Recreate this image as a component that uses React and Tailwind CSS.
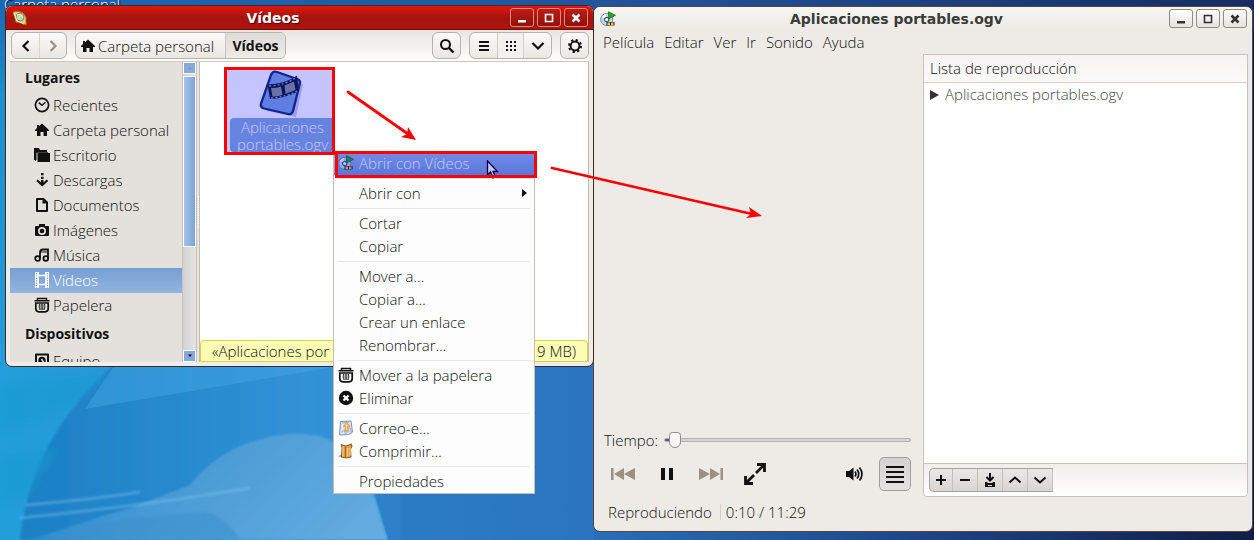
import React from "react";

const ink = "#111111";

function Svg({ children, size = 16, className = "", ...rest }) {
  return (
    <svg width={size} height={size} viewBox="0 0 16 16" fill="none" className={"shrink-0 " + className} aria-hidden="true" {...rest}>
      {children}
    </svg>
  );
}

const HomeIcon = () => (
  <Svg>
    <path d="M8 1.5 15 8v1h-2v5H9.500v-4h-3v4H3V9H1V8l2-2V3h2v1.300z" fill={ink} />
  </Svg>
);
const ClockIcon = () => (
  <Svg>
    <circle cx="8" cy="8" r="6.600" stroke={ink} strokeWidth="1.700" />
    <path d="M4.800 5.600 8 8.400l3.400-3.200" stroke={ink} strokeWidth="1.400" />
  </Svg>
);
const FolderIcon = () => (
  <Svg>
    <path d="M0 1h5l1 2h7v2H2.500v8H0z" fill={ink} />
    <path d="M3.500 6H16v9H3.500z" fill={ink} />
    <path d="M1.500 14V5.500H14" stroke={ink} strokeWidth=".8" />
  </Svg>
);
const DownloadIcon = () => (
  <Svg>
    <path d="M7 1h2.500v2.300H7zM7 4.800h2.500v2.300H7zM7 8h2.500v4H7z" fill={ink} />
    <path d="M3 8.300 8.200 13l5.300-4.700" stroke={ink} strokeWidth="2.200" />
  </Svg>
);
const DocumentIcon = () => (
  <Svg>
    <path d="M3 2h6.500L13 5.500V14H3z" stroke={ink} strokeWidth="2" strokeLinejoin="round" />
    <path d="M8.500 2v4.500H13z" fill={ink} />
  </Svg>
);
const CameraIcon = () => (
  <Svg>
    <path fillRule="evenodd" d="M5 2h6v2h3q1 0 1 1v8q0 1-1 1H2q-1 0-1-1V5q0-1 1-1h3zm3 3a4 4 0 1 0 0 8 4 4 0 0 0 0-8z" fill={ink} />
    <circle cx="8" cy="9" r="2.300" fill={ink} />
  </Svg>
);
const MusicIcon = () => (
  <Svg>
    <path d="M6 11V5.500q0-3 3-3h5V11" stroke={ink} strokeWidth="1.800" />
    <circle cx="3.600" cy="11.500" r="2.400" stroke={ink} strokeWidth="1.800" />
    <circle cx="11.800" cy="11.500" r="2.300" stroke={ink} strokeWidth="1.800" />
    <path d="M6 5h7" stroke={ink} />
  </Svg>
);
const FilmIcon = () => (
  <Svg>
    <path d="M1 0h4v16H1zM11 0h4v16h-4z" fill="#fff" />
    <path d="M5 3.500h6M5 12.500h6" stroke="#fff" strokeWidth="1.500" />
    <path d="M2.500 1v15M13.500 1v15" stroke="#7da3d6" strokeWidth="1.200" strokeDasharray="1.200 1.200" />
  </Svg>
);
const TrashIcon = () => (
  <Svg>
    <path d="M3.500 3.500V1.500h9v2M.5 3.800h15" stroke={ink} strokeWidth="1.500" />
    <path d="M1.800 6h12.400v5.500q0 3.300-3 3.300H4.800q-3 0-3-3.300z" stroke={ink} strokeWidth="1.700" />
    <path d="M5.500 7q-1 3 .6 6M7.200 7v6M8.800 7v6M10.500 7q1 3-.6 6" stroke={ink} strokeWidth=".9" />
  </Svg>
);
const DriveIcon = () => (
  <Svg>
    <path d="M2 1.500h12V16H2z" stroke={ink} strokeWidth="2" strokeLinejoin="round" />
    <circle cx="8" cy="7.500" r="3.700" fill={ink} />
    <path d="M7.500 6 10 10" stroke="#e4e0db" strokeWidth="1.500" />
  </Svg>
);
const DeleteIcon = () => (
  <Svg>
    <circle cx="8" cy="8" r="7.200" fill={ink} />
    <path d="m5.500 5.500 5 5m0-5-5 5" stroke="#fff" strokeWidth="2.200" />
  </Svg>
);
const MailIcon = () => (
  <Svg>
    <path d="M2.500 1.500 13 1l1.500 11L11 14.500 1.500 15z" fill="#dce7f3" stroke="#7891b5" />
    <path d="M3.500 3 11 2.500M3 12.500l3-2" stroke="#9db3d0" />
    <circle cx="10" cy="11" r="3.600" fill="#c8d8ec" stroke="#8fa6c6" strokeWidth=".8" />
    <path d="m8.500 2.500 3.700 3.700h-2v5H7.300V6.500H5.500z" fill="#fbb35d" stroke="#e79232" strokeWidth=".7" />
    <path d="M8.700 5v5" stroke="#ffe2a3" />
  </Svg>
);
const PackageIcon = () => (
  <Svg>
    <path d="M0 13.500 5 10v5z" fill="#aaa" />
    <path d="M3 1.500 8 3l5.500-2 .5 3-1.500 2 .5 8-5 1-4.500-1 .5-9z" fill="#d99a43" stroke="#7c4c15" strokeWidth=".9" />
    <path d="M5 3.500v10M9.500 5v9M12 4.500v8" stroke="#f7cd7c" strokeWidth="1.300" />
    <path d="M7.500 4v10" stroke="#a86a20" />
  </Svg>
);
const DiscIcon = () => (
  <Svg>
    <circle cx="6.700" cy="8.500" r="6" fill="#c7d8e8" stroke="#6f8aa5" />
    <path d="M2 6a5 5 0 0 1 4-3l.5 5z" fill="#fff" />
    <circle cx="6.700" cy="8.500" r="2.200" fill="#fff" stroke="#365b7b" strokeWidth="1.200" />
    <path d="m8.500.7 7 3.600-7 3.700z" fill="#25a52a" stroke="#17631b" strokeWidth=".7" />
    <path d="M6.500 11h8v3.600h-8z" fill="#262626" />
    <path d="M7.500 11.400h2.500v2.800H7.500zM11 11.400h2.500v2.800H11z" fill="#edc536" />
  </Svg>
);
const ShellIcon = () => (
  <Svg>
    <path d="M1 2q5-2 10 1l3 4v8l-4-2-6-1z" fill="#e6ce7b" stroke="#9a742b" />
    <circle cx="8" cy="7" r="4" fill="#d0d6b3" stroke="#77865c" />
    <path d="m2 3 3 8 7 3M5 5q4-2 6 3" stroke="#fff4bb" />
  </Svg>
);
const Chevron = ({ d, color = ink }) => (
  <Svg>
    <path d={d} stroke={color} strokeWidth="2.200" />
  </Svg>
);
const UP = "m2.500 10.500 5.500-5 5.500 5";
const DOWN = "m2.500 5.500 5.500 5 5.500-5";

const places = [
  ["Recientes", ClockIcon],
  ["Carpeta personal", HomeIcon],
  ["Escritorio", FolderIcon],
  ["Descargas", DownloadIcon],
  ["Documentos", DocumentIcon],
  ["Imágenes", CameraIcon],
  ["Música", MusicIcon],
  ["Vídeos", FilmIcon],
  ["Papelera", TrashIcon],
];

function Wallpaper() {
  return (
    <svg className="absolute inset-0 h-full w-full" viewBox="0 0 1254 540" preserveAspectRatio="none" aria-hidden="true">
      <defs>
        <linearGradient id="sky" x1="0" y1="0" x2="1" y2="0">
          <stop offset="0" stopColor="#219fdb" />
          <stop offset=".2" stopColor="#2f90d3" />
          <stop offset=".3" stopColor="#2d85cc" />
          <stop offset=".47" stopColor="#2870b9" />
          <stop offset=".75" stopColor="#1d4383" />
          <stop offset="1" stopColor="#111d46" />
        </linearGradient>
        <linearGradient id="top" x1="0" y1="0" x2="1" y2="0">
          <stop offset="0" stopColor="#1b68b8" />
          <stop offset=".5" stopColor="#22549b" />
          <stop offset="1" stopColor="#172d60" />
        </linearGradient>
        <linearGradient id="edge" x1="0" y1="0" x2="0" y2="1">
          <stop offset="0" stopColor="#1a66b5" />
          <stop offset=".25" stopColor="#1a90cc" />
          <stop offset="1" stopColor="#259edd" />
        </linearGradient>
        <linearGradient id="wave" x1="0" y1="0" x2="1" y2="0">
          <stop offset="0" stopColor="#1c80c5" />
          <stop offset=".35" stopColor="#2688cd" />
          <stop offset=".75" stopColor="#3292d6" />
          <stop offset="1" stopColor="#3090d4" />
        </linearGradient>
        <linearGradient id="glow" x1="0" y1=".3" x2="1" y2=".6">
          <stop offset="0" stopColor="#3f9bd8" stopOpacity=".2" />
          <stop offset=".5" stopColor="#519fd7" stopOpacity=".9" />
          <stop offset="1" stopColor="#62abe0" />
        </linearGradient>
        <filter id="soft"><feGaussianBlur stdDeviation="3" /></filter>
        <filter id="hazy"><feGaussianBlur stdDeviation="1.200" /></filter>
      </defs>
      <rect width="1254" height="540" fill="url(#sky)" />
      <rect width="1254" height="30" fill="url(#top)" />
      <rect width="8" height="380" fill="url(#edge)" />
      <path d="M20 540Q30 440 112 366H400V540z" fill="url(#wave)" filter="url(#hazy)" />
      <path d="M85 409 114 366H334V367Q200 390 85 409z" fill="#3fa6e2" opacity=".5" />
      <path d="M30 540Q120 510 130 508L190 485 Q225 440 290 434 350 430 372 490L388 540z" fill="url(#glow)" filter="url(#hazy)" />
      <path d="M0 455 60 449 28 495 0 505zM0 386l110-13-40 35-70 25z" fill="#169acf" opacity=".5" filter="url(#soft)" />
      <path d="M20 518Q150 505 250 488M25 505Q90 500 140 492" stroke="#7fc4ee" strokeWidth="3" opacity=".4" fill="none" filter="url(#hazy)" />
      <path d="M240 540q-15-25-35-28l-75 6-80 16v6z" fill="#3a90cc" opacity=".55" filter="url(#hazy)" />
      <path d="M374 490 388 540H594V366H450z" fill="#2c78c2" opacity=".6" />
    </svg>
  );
}

const winGlyphs = {
  Minimizar: <path d="M4 10h8v2.500H4z" fill="currentColor" />,
  Maximizar: <path d="M4.500 4.500h7v7h-7z" stroke="currentColor" strokeWidth="1.600" />,
  Cerrar: <path d="m4.500 4.500 7 7m0-7-7 7" stroke="currentColor" strokeWidth="2.600" />,
};

function WindowButtons({ look }) {
  return (
    <div className="flex gap-[3px]">
      {Object.keys(winGlyphs).map((name) => (
        <button key={name} aria-label={name} className={"flex h-[19px] w-6 items-center justify-center rounded-[3px] border " + look}>
          <Svg>{winGlyphs[name]}</Svg>
        </button>
      ))}
    </div>
  );
}

const group = "flex h-[27px] overflow-hidden rounded-[6px] border border-[#b5b3ae] bg-gradient-to-b from-[#fbfaf9] to-[#eae6e2]";
const cell = "flex w-[27px] items-center justify-center";

function FileManager() {
  return (
    <section className="absolute left-[5px] top-[5px] flex h-[362px] w-[589px] flex-col overflow-hidden rounded-[7px] border border-[#3c2a24] bg-[#f0ece8]">
      <header className="flex h-6 shrink-0 items-center border-b border-[#6b0e08] bg-gradient-to-b from-[#e51508] via-[#a41510] to-[#b0120b] pl-[6px] pr-[5px] text-white">
        <ShellIcon />
        <h1 className="flex-1 pl-2 text-center font-[DejaVu_Sans,sans-serif] text-[14px] font-bold leading-[22px] [text-shadow:1px_1px_1px_#400]">Vídeos</h1>
        <WindowButtons look="border-[#dc8a83] bg-gradient-to-b from-[#c01c14] to-[#8e110b] text-white" />
      </header>
      <nav className="mx-1 flex h-8 shrink-0 items-center border-b border-[#d0c5bb] bg-gradient-to-b from-[#e9e5e1] to-[#fdfdfc] pl-px">
        <div className={group}>
          <button aria-label="Atrás" className={cell}><Chevron d="M10.500 3 5.500 8l5 5" /></button>
          <button aria-label="Adelante" className={cell + " border-l border-[#dcd5cf]"}><Chevron d="m5.500 3 5 5-5 5" color="#9c8f84" /></button>
        </div>
        <div className={group + " ml-2"}>
          <button className="flex w-[149px] items-center gap-[2px] whitespace-nowrap pl-1"><HomeIcon />Carpeta personal</button>
          <button className="w-[60px] border-l border-[#cfc8c1] bg-gradient-to-b from-[#dfdbd6] to-[#eeebe8] text-center text-[14px] font-bold">Vídeos</button>
        </div>
        <div className="ml-auto flex gap-2">
          <div className={group}>
            <button aria-label="Buscar" className={cell}>
              <Svg><circle cx="6.500" cy="6.500" r="4.500" stroke={ink} strokeWidth="2" /><path d="m9.500 9.500 5 5" stroke={ink} strokeWidth="2.400" /></Svg>
            </button>
          </div>
          <div className={group}>
            <button aria-label="Lista" className={cell}><Svg><path d="M3 4h10M3 8h10M3 12h10" stroke={ink} strokeWidth="2" /></Svg></button>
            <button aria-label="Iconos" className={cell + " border-x border-[#d5cec7] bg-[#f3f1ef]"}>
              <Svg><path d="M3 4h10M3 8h10M3 12h10" stroke={ink} strokeWidth="2" strokeDasharray="2 2" /></Svg>
            </button>
            <button aria-label="Opciones de vista" className={cell}><Chevron d="m2.500 5 5.500 5.500L13.500 5" /></button>
          </div>
          <div className={group}>
            <button aria-label="Ajustes" className={cell}>
              <Svg><circle cx="8" cy="8" r="4.400" stroke={ink} strokeWidth="2" /><circle cx="8" cy="8" r="6" stroke={ink} strokeWidth="2" strokeDasharray="2.200 2.512" /></Svg>
            </button>
          </div>
        </div>
      </nav>
      <div className="mx-1 mb-1 flex min-h-0 flex-1">
        <aside className="w-[172px] shrink-0 overflow-hidden bg-[#e4e0db]">
          <h2 className="pl-[15px] text-[14px] font-bold leading-[31px]">Lugares</h2>
          <ul>
            {places.map(([name, Icon]) => (
              <li key={name}>
                <a href="#lugar" className={"flex h-[25px] items-center gap-[3px] whitespace-nowrap pb-[2px] pl-6 " + (name === "Vídeos" ? "bg-gradient-to-b from-[#779fd2] to-[#92b4e0] text-white" : "")}>
                  <Icon />{name}
                </a>
              </li>
            ))}
          </ul>
          <h2 className="pl-[15px] text-[14px] font-bold leading-[31px]">Dispositivos</h2>
          <a href="#equipo" className="flex h-[25px] items-center gap-[3px] pb-[2px] pl-6"><DriveIcon />Equipo</a>
        </aside>
        <div className="flex w-[15px] shrink-0 flex-col border-x border-[#c8c1ba] bg-gradient-to-r from-[#d2d2d2] to-[#e4e4e4]">
          <div className="flex h-3 items-center justify-center border border-white bg-[#85a9dc]"><Svg size={8}><path d="M4 10h8L8 6z" fill="#9c8f84" /></Svg></div>
          <div className="mt-[2px] h-[171px] border border-white bg-gradient-to-r from-[#a4c2ea] to-[#7da3d8]" />
          <div className="mt-auto flex h-3 items-center justify-center border border-white bg-[#85a9dc]"><Svg size={8}><path d="M4 5h8l-4 5z" fill={ink} /></Svg></div>
        </div>
        <div className="flex w-[3px] shrink-0 items-center justify-center border-r border-[#c5bbb1] bg-[#e9e5e1]">
          <div className="h-8 border-l border-dotted border-white" />
        </div>
        <main className="flex min-w-0 flex-1 flex-col justify-between border-r border-[#c5bbb1] bg-white">
          <button className="ml-[30px] mt-2 flex w-[105px] flex-col items-center">
            <svg width="48" height="48" viewBox="0 0 48 48" className="shrink-0" aria-hidden="true">
              <path d="M17 6 44 14 37 47 8 41z" fill="#9b9bb0" opacity=".5" />
              <path d="M18 2 38 9q3.500 1 3 4L34 41q-1 4-5 3L5 38.500Q1 37.500 2 33.500L12 5q1.500-4.500 6-3z" fill="#7da3d8" stroke="#183070" strokeWidth="2.300" />
              <path d="M8.500 14.500Q27 14 38 5.500l2 15.500Q27 28 11 29z" fill="#15182c" />
              <path d="M12 18q6 0 10-1.500L23.500 25q-5 1.500-10 1.800zM25.500 15.500 35 11.500l1.500 8.500-10 4z" fill="#86958e" />
              <path d="M10 16Q27 15 37 7.500M12 28Q28 27 39 20.500" stroke="#7da3d8" strokeWidth="1.300" strokeDasharray="2 2.200" fill="none" />
            </svg>
            <span className="block h-[34px] w-full rounded-[4px] bg-[#87abd7] pt-px text-center leading-[17px] text-white">Aplicaciones portables.ogv</span>
          </button>
          <footer className="flex h-[22px] items-center justify-between whitespace-nowrap rounded-t-[4px] border border-[#d4d545] bg-[#fcfcb5] px-[11px]">
            <span>«Aplicaciones por</span>
            <span>9 MB)</span>
          </footer>
        </main>
      </div>
    </section>
  );
}

const menu = [
  [["Abrir con Vídeos", DiscIcon]],
  [["Abrir con"]],
  [["Cortar"], ["Copiar"]],
  [["Mover a…"], ["Copiar a…"], ["Crear un enlace"], ["Renombrar…"]],
  [["Mover a la papelera", TrashIcon], ["Eliminar", DeleteIcon]],
  [["Correo-e…", MailIcon], ["Comprimir…", PackageIcon]],
  [["Propiedades"]],
];

function ContextMenu() {
  return (
    <div role="menu" className="absolute left-[333px] top-[152px] w-[202px] border-x border-b border-[#c9beb4] bg-[#fdfdfd]">
      {menu.map((items, i) => (
        <div key={i}>
          {i > 0 && <div role="separator" className="mx-1 my-[3px] h-px bg-[#e9e7e6]" />}
          {items.map(([name, Icon]) => (
            <button key={name} role="menuitem" className={"flex h-[23px] w-full items-center gap-[5px] whitespace-nowrap pb-[2px] pl-1 pr-[6px] " + (i === 0 ? "bg-gradient-to-b from-[#96b6e2] to-[#749bd0] text-white" : "")}>
              {Icon ? <Icon /> : <span className="w-4 shrink-0" />}
              <span className="flex-1 text-left">{name}</span>
              {i === 1 && <svg width="6" height="8" viewBox="0 0 6 8" aria-hidden="true"><path d="M0 0v8l5-4z" fill={ink} /></svg>}
            </button>
          ))}
        </div>
      ))}
    </div>
  );
}

function Player() {
  const bottom = [
    ["Añadir", <path key="a" d="M8 3v10M3 8h10" stroke={ink} strokeWidth="2" />],
    ["Quitar", <path key="b" d="M3 8h10" stroke={ink} strokeWidth="2" />],
    ["Guardar", <g key="c"><path d="M8 1v7M4.500 5 8 8.500 11.500 5" stroke={ink} strokeWidth="2" /><path fillRule="evenodd" d="M3 10h2l1 1h4l1-1h2v5H3zm3 3v1h4v-1z" fill={ink} /></g>],
    ["Subir", <path key="d" d={UP} stroke={ink} strokeWidth="2" />],
    ["Bajar", <path key="e" d={DOWN} stroke={ink} strokeWidth="2" />],
  ];
  return (
    <section className="absolute left-[593px] right-px top-[6px] flex h-[526px] flex-col overflow-hidden rounded-[7px] border border-[#54443c] bg-[#eeebe7]">
      <header className="flex h-[23px] shrink-0 items-center bg-gradient-to-b from-[#f7f6f3] to-[#eeebe7] pl-[6px] pr-[5px] text-[#3b3b38]">
        <DiscIcon />
        <h1 className="flex-1 pl-2 text-center font-[DejaVu_Sans,sans-serif] text-[14px] font-bold leading-[22px]">Aplicaciones portables.ogv</h1>
        <WindowButtons look="border-[#8d8a86] bg-gradient-to-b from-white to-[#e6e2dd] text-[#333]" />
      </header>
      <nav className="flex h-6 shrink-0 items-center gap-[10px] pl-[9px]">
        {["Película", "Editar", "Ver", "Ir", "Sonido", "Ayuda"].map((m) => <button key={m}>{m}</button>)}
      </nav>
      <div className="flex min-h-0 flex-1 pr-1">
        <div className="flex flex-1 flex-col justify-end pr-3">
          <label className="flex h-6 items-center gap-[6px] pb-[2px] pl-[10px]">
            Tiempo:
            <input type="range" min="0" max="689" defaultValue="13" className="h-[18px] min-w-0 flex-1 appearance-none bg-transparent [&::-webkit-slider-runnable-track]:h-1 [&::-webkit-slider-runnable-track]:rounded-full [&::-webkit-slider-runnable-track]:border [&::-webkit-slider-runnable-track]:border-[#b3b0ad] [&::-webkit-slider-runnable-track]:bg-[linear-gradient(90deg,#3461c9_8px,#d5d3d1_8px)] [&::-webkit-slider-thumb]:-mt-[7px] [&::-webkit-slider-thumb]:h-4 [&::-webkit-slider-thumb]:w-3 [&::-webkit-slider-thumb]:appearance-none [&::-webkit-slider-thumb]:rounded-t-[4px] [&::-webkit-slider-thumb]:rounded-b-[7px] [&::-webkit-slider-thumb]:border [&::-webkit-slider-thumb]:border-[#8e8c89] [&::-webkit-slider-thumb]:bg-[#f7f6f5]" />
          </label>
          <div className="flex h-[42px] items-center pl-4">
            <button aria-label="Anterior"><svg width="26" height="14" viewBox="0 0 26 14" aria-hidden="true"><path d="M1 1h2.500v12H1zM14 1v12L4 7zM25 1v12L14 7z" fill="#9c8f84" /></svg></button>
            <button aria-label="Pausa" className="ml-6"><svg width="14" height="14" viewBox="0 0 14 14" aria-hidden="true"><path d="M1 1h4v12H1zM9 1h4v12H9z" fill={ink} /></svg></button>
            <button aria-label="Siguiente" className="ml-6"><svg width="26" height="14" viewBox="0 0 26 14" aria-hidden="true"><path d="M22.500 1H25v12h-2.500zM12 1v12l10-6zM1 1v12l11-6z" fill="#9c8f84" /></svg></button>
            <button aria-label="Pantalla completa" className="ml-5">
              <svg width="22" height="22" viewBox="0 0 22 22" fill="none" aria-hidden="true"><path d="M13 1.500h7.500V9M20 2l-8 8M1.500 13v7.500H9M2 20l8-8" stroke={ink} strokeWidth="2.800" /></svg>
            </button>
            <button aria-label="Volumen" className="ml-auto">
              <svg width="18" height="16" viewBox="0 0 18 16" fill="none" aria-hidden="true"><path d="M0 5h3l4.500-3.500v13L3 11H0z" fill={ink} /><path d="M9 5.500q1.800 2.500 0 5M11 3.500q3.500 4.500 0 9M13.500 1.500q5 6.500 0 13" stroke={ink} strokeWidth="1.700" /></svg>
            </button>
            <button aria-label="Barra lateral" className="ml-[15px] flex h-[34px] w-8 items-center justify-center rounded-[5px] border border-[#a19f9c] bg-gradient-to-b from-[#d3d2d1] to-[#e3e2e1]">
              <svg width="18" height="20" viewBox="0 0 18 20" aria-hidden="true"><path d="M0 3h18M0 8h18M0 13h18M0 18h18" stroke={ink} strokeWidth="2.200" /></svg>
            </button>
          </div>
          <div className="flex h-9 items-center pb-[2px] pl-[14px]">
            <span>Reproduciendo</span>
            <span className="ml-2 h-4 border-l border-[#d8cec5] pl-[5px] leading-4">0:10 / 11:29</span>
          </div>
        </div>
        <aside className="mb-[34px] flex w-[325px] shrink-0 flex-col rounded-b-[4px] border border-[#cbc1b8] bg-white">
          <h2 className="h-7 border-b border-[#d6cdc6] bg-gradient-to-b from-[#f5f4f3] to-[#fbfafa] pl-[6px] leading-[27px]">Lista de reproducción</h2>
          <div className="flex flex-1 items-start gap-[6px] border-b border-[#c9c2ba] pl-[6px] pt-px text-[#444]">
            <svg width="9" height="10" viewBox="0 0 9 10" className="mt-[6px]" aria-hidden="true"><path d="M0 0v10l9-5z" fill="#333" /></svg>
            Aplicaciones portables.ogv
          </div>
          <div className="flex h-8 items-center rounded-b-[4px] bg-gradient-to-b from-[#efeeeb] to-white pl-[5px]">
            <div className="flex h-6 overflow-hidden rounded-l-[5px] border border-r-0 border-[#a6a39f] bg-gradient-to-b from-[#eae8e7] to-[#d8d4d1]">
              {bottom.map(([name, glyph]) => (
                <button key={name} aria-label={name} className="flex w-[25px] items-center justify-center border-r border-[#c8c0b4] first:w-[23px]"><Svg>{glyph}</Svg></button>
              ))}
            </div>
          </div>
        </aside>
      </div>
    </section>
  );
}

function Annotations() {
  return (
    <div className="pointer-events-none">
      <svg width="13" height="20" viewBox="0 0 13 20" className="absolute left-[486px] top-[160px]" aria-hidden="true">
        <path d="M1.500 1v14l3-3 2.500 6 2.500-1-2.500-5.500h4.500z" fill="#fff" stroke="#000" strokeWidth="1.300" />
      </svg>
      <div className="absolute left-[224px] top-[67px] h-[88px] w-[111px] border-[3px] border-[#ff0000] bg-[#0000ff]/23 bg-clip-padding" />
      <div className="absolute left-[335px] top-[151px] h-[27px] w-[202px] border-[3px] border-[#ff0000] bg-[#0000ff]/23 bg-clip-padding" />
      <svg width="420" height="140" viewBox="345 85 420 140" className="absolute left-[345px] top-[85px]" aria-hidden="true">
        <path d="m348 92 60 42M552 168l200 46" stroke="#f00" strokeWidth="2.800" strokeLinecap="round" />
        <path d="m416 140-15-3 6-3 1-7zM762 216l-16 2 5-4-2-7z" fill="#f00" />
      </svg>
    </div>
  );
}

export default function App() {
  return (
    <div className="relative h-screen w-full overflow-hidden font-[Open_Sans,Noto_Sans,sans-serif] text-[15px] font-[350] leading-5 text-[#111]">
      <Wallpaper />
      <span className="absolute -top-[6px] left-1 text-white [text-shadow:1px_1px_1px_#000]">Carpeta personal</span>
      <Player />
      <FileManager />
      <ContextMenu />
      <Annotations />
    </div>
  );
}
